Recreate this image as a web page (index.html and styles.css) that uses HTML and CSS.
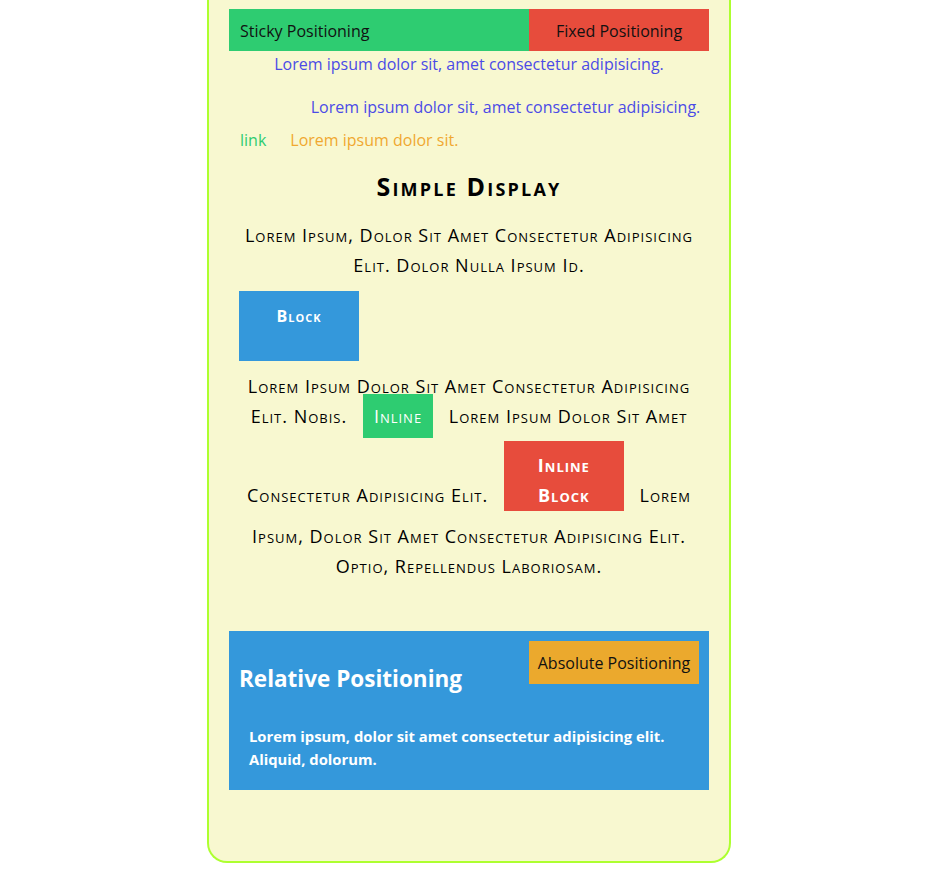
FILE: index.html
```html
<!DOCTYPE html>
<html lang="en">
<head>
<meta charset="utf-8">
<title>Positioning &amp; Display</title>
<link rel="stylesheet" href="styles.css">
</head>
<body>
<div class="container">
  <div class="sticky-bar">
    <span class="sticky-label">Sticky Positioning</span>
    <div class="fixed-box">Fixed Positioning</div>
  </div>
  <p class="blue-line">Lorem ipsum dolor sit, amet consectetur adipisicing.</p>
  <p class="blue-line shifted">Lorem ipsum dolor sit, amet consectetur adipisicing.</p>
  <p class="link-row"><a class="link" href="#">link</a><span class="orange-text">Lorem ipsum dolor sit.</span></p>

  <h2 class="display-title">Simple Display</h2>
  <p class="caps-text">Lorem Ipsum, Dolor Sit Amet Consectetur Adipisicing Elit. Dolor Nulla Ipsum Id.</p>
  <div class="block-box">Block</div>
  <p class="caps-text">Lorem Ipsum Dolor Sit Amet Consectetur Adipisicing Elit. Nobis. <span class="inline-box">Inline</span> Lorem Ipsum Dolor Sit Amet Consectetur Adipisicing Elit. <span class="inline-block-box">Inline Block</span> Lorem Ipsum, Dolor Sit Amet Consectetur Adipisicing Elit. Optio, Repellendus Laboriosam.</p>

  <div class="relative-box">
    <h2 class="relative-title">Relative Positioning</h2>
    <div class="absolute-box">Absolute Positioning</div>
    <p class="relative-text">Lorem ipsum, dolor sit amet consectetur adipisicing elit. Aliquid, dolorum.</p>
  </div>
</div>
</body>
</html>
```

FILE: styles.css
```css
html, body {
  margin: 0;
  padding: 0;
  background: #ffffff;
}

body {
  padding-right: 1px;
  font-family: "Open Sans", "Noto Sans", sans-serif;
  font-size: 16px;
}

.container {
  width: 480px;
  margin: 0 auto;
  padding: 9px 20px 71px;
  background: #f8f8d0;
  border: 2px solid #adff2f;
  border-top: 0;
  border-radius: 0 0 20px 20px;
}

.sticky-bar {
  position: relative;
  height: 42px;
  background: #2ecc71;
  display: flex;
  align-items: center;
  padding: 1px 11px 0;
  box-sizing: border-box;
  color: #111;
}

.fixed-box {
  position: absolute;
  top: 0;
  right: 0;
  width: 180px;
  height: 42px;
  padding-top: 1px;
  box-sizing: border-box;
  background: #e74c3c;
  display: flex;
  align-items: center;
  justify-content: center;
  color: #111;
}

.blue-line {
  margin: 1px 0 0;
  color: #4b4be6;
  text-align: center;
  line-height: 25px;
}

.blue-line.shifted {
  margin-top: 18px;
  padding-left: 73px;
}

.link-row {
  margin: 8px 0 0;
  padding-left: 11px;
  line-height: 25px;
  display: flex;
  gap: 24px;
}

.link {
  color: #2ecc71;
  text-decoration: none;
}

.orange-text {
  color: #f0a830;
}

.display-title {
  margin: 17px 0 0;
  text-align: center;
  font-variant: small-caps;
  font-size: 25px;
  line-height: 32px;
  letter-spacing: 2.2px;
  color: #000;
}

.caps-text {
  margin: 18px 0 0;
  text-align: center;
  font-variant: small-caps;
  font-size: 18px;
  line-height: 30px;
  letter-spacing: 1px;
  color: #000;
}

.block-box {
  width: 120px;
  height: 70px;
  box-sizing: border-box;
  margin: 11px 10px 10px;
  padding-top: 10px;
  background: #3498db;
  color: #fff;
  font-weight: bold;
  font-variant: small-caps;
  letter-spacing: 1px;
  text-align: center;
  line-height: 30px;
}

.block-box + .caps-text {
  margin-top: 0;
}

.inline-box {
  background: #2ecc71;
  color: #fff;
  padding: 10px 11px;
  margin: 0 10px;
}

.inline-block-box {
  display: inline-block;
  width: 120px;
  height: 70px;
  box-sizing: border-box;
  padding: 9px 10px 0;
  margin: 10px;
  background: #e74c3c;
  color: #fff;
  font-weight: bold;
  text-align: center;
  vertical-align: baseline;
}

.relative-box {
  position: relative;
  margin-top: 50px;
  padding: 10px 10px 9px;
  background: #3498db;
  color: #fff;
}

.relative-title {
  margin: 20px 0 18px;
  font-size: 22.5px;
  line-height: 36px;
}

.absolute-box {
  position: absolute;
  top: 10px;
  right: 10px;
  width: 170px;
  height: 43px;
  display: flex;
  align-items: center;
  justify-content: center;
  background: #eba92d;
  color: #111;
}

.relative-text {
  margin: 0;
  padding: 10px;
  font-size: 14.8px;
  font-weight: bold;
  line-height: 23px;
}
```
